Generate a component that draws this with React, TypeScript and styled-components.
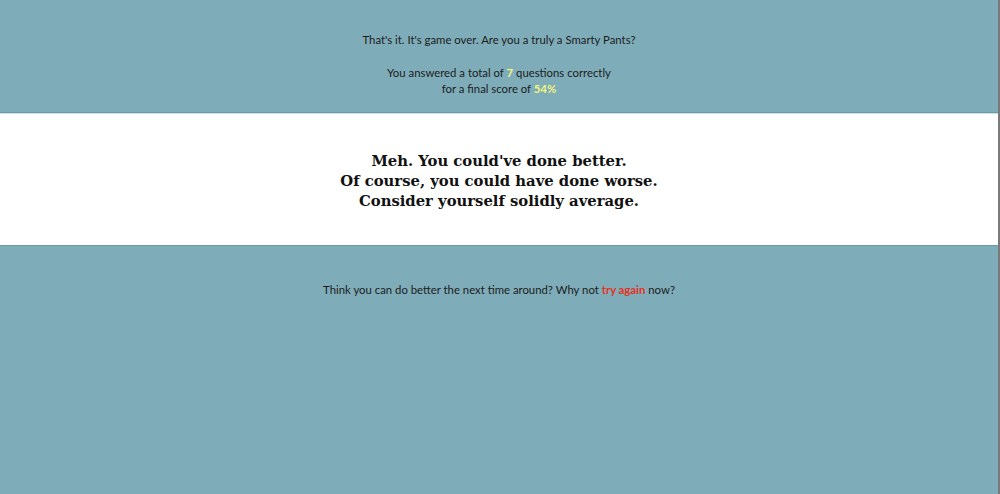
import React from "react";
import styled, { createGlobalStyle } from "styled-components";

const Global = createGlobalStyle`
  html, body { margin: 0; padding: 0; }
  body {
    background: #7eacb9;
    font-family: "Lato", "Open Sans", sans-serif;
    color: #1c1c1c;
    border-right: 2px solid #7a7a7a;
    min-height: 494px;
    box-sizing: border-box;
  }
`;

const Page = styled.div`
  display: flex;
  flex-direction: column;
  min-height: 494px;
`;

const Intro = styled.section`
  padding: 32px 0 15px;
  text-align: center;
  font-size: 11.35px;
  line-height: 16px;
  border-bottom: 1px solid #6a9aa8;
`;

const Para = styled.p`
  margin: 0 0 17px;
  &:last-child { margin-bottom: 0; }
`;

const Hi = styled.span`
  color: #f4f47a;
  font-weight: 700;
`;

const Verdict = styled.section`
  background: #fff;
  border-top: 1px solid #cfe2e7;
  border-bottom: 1px solid #6a9aa8;
  padding: 37px 0 34px;
  text-align: center;
  font-family: "DejaVu Serif", serif;
  font-weight: 700;
  font-size: 14.8px;
  line-height: 20px;
  color: #111;
`;

const Outro = styled.section`
  padding: 36px 0;
  text-align: center;
  font-size: 11.35px;
  line-height: 16px;
`;

const Retry = styled.a`
  color: #e5321e;
  font-weight: 700;
  text-decoration: none;
  cursor: pointer;
`;

export default function App() {
  return (
    <>
      <Global />
      <Page>
        <Intro>
          <Para>That's it. It's game over. Are you a truly a Smarty Pants?</Para>
          <Para>
            You answered a total of <Hi>7</Hi> questions correctly
            <br />
            for a final score of <Hi>54%</Hi>
          </Para>
        </Intro>
        <Verdict>
          Meh. You could've done better.
          <br />
          Of course, you could have done worse.
          <br />
          Consider yourself solidly average.
        </Verdict>
        <Outro>
          Think you can do better the next time around? Why not <Retry>try again</Retry> now?
        </Outro>
      </Page>
    </>
  );
}
